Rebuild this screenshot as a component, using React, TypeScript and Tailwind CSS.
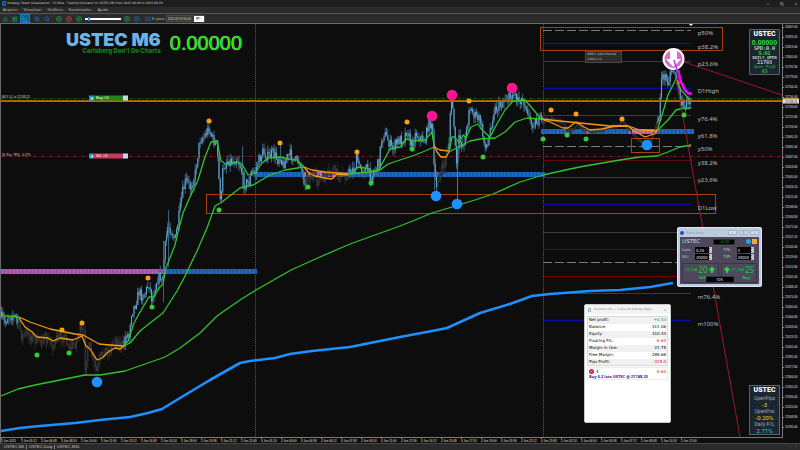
import React, { useState } from "react";
import {
  ArrowBigUp,
  ChartCandlestick,
  ChartLine,
  ChartNoAxesColumn,
  CirclePlay,
  CircleStop,
  Copy,
  Minus,
  SkipForward,
  X,
  ZoomIn,
  ZoomOut,
} from "lucide-react";

type Point = [number, number];

const ORIGIN_X = 1;
const ORIGIN_Y = 24;
const CHART_W = 781;
const CHART_H = 413;
const BAR_STEP = 1.25;

// middle of the traded range
const pricePath: Point[] = [
  [1, 317], [5, 323], [8, 316], [12, 315], [16, 318], [19, 325], [22, 337], [25, 334], [30, 336],
  [35, 338], [37, 349], [38, 338], [50, 342], [53, 345], [60, 336], [66, 338], [70, 349], [76, 342],
  [80, 329], [84, 336], [85, 368], [88, 345], [92, 356], [97, 374], [100, 358], [105, 350],
  [110, 350], [115, 338], [120, 345], [124, 345], [126, 333], [129, 336], [131, 313], [135, 305],
  [139, 292], [142, 296], [146, 291], [149, 283], [152, 301], [156, 282], [160, 275], [162, 285],
  [165, 248], [168, 225], [171, 230], [175, 240], [179, 216], [182, 195], [186, 180], [190, 188],
  [195, 175], [197, 160], [200, 139], [204, 137], [209, 128], [213, 140], [217, 145], [219, 180],
  [221, 205], [223, 167], [228, 160], [232, 162], [237, 158], [241, 168], [244, 184], [249, 182],
  [252, 172], [255, 173], [258, 162], [263, 152], [268, 157], [273, 153], [278, 160], [280, 153],
  [282, 166], [287, 158], [291, 154], [295, 161], [300, 161], [304, 180], [310, 176], [318, 181],
  [325, 178], [333, 170], [340, 177], [346, 175], [352, 170], [355, 168], [357, 156], [359, 168],
  [367, 169], [371, 178], [375, 170], [379, 162], [381, 142], [384, 133], [388, 140], [392, 149],
  [398, 141], [404, 138], [407, 129], [411, 146], [416, 133], [420, 138], [425, 141], [428, 125],
  [432, 122], [434, 165], [436, 192], [438, 178], [444, 165], [449, 141], [450, 115], [452, 98],
  [454, 125], [456, 165], [457, 160], [459, 140], [463, 145], [467, 130], [469, 107], [475, 116],
  [480, 120], [484, 142], [488, 146], [490, 130], [494, 110], [500, 106], [505, 98], [510, 98],
  [513, 93], [517, 97], [522, 100], [527, 106], [530, 123], [536, 122], [541, 120], [550, 119],
  [560, 121], [570, 133], [576, 124], [585, 130], [595, 132], [605, 129], [615, 126], [622, 122],
  [632, 133], [638, 139], [645, 143], [652, 139], [656, 125], [659, 116], [661, 80], [664, 76],
  [668, 80], [672, 68], [676, 74], [678, 90], [681, 100], [684, 108], [688, 102], [691, 98],
];

// stretches with no trend, drawn in dark grey
const flatRanges: Point[] = [[18, 124], [306, 349], [437, 449], [544, 657]];

const greenLines: Point[][] = [
  [[1, 312], [5, 316], [19, 317]],
  [[124, 346], [128, 341], [134, 323], [140, 312], [149, 297], [154, 297], [159, 288], [163, 284],
    [166, 268], [175, 245], [178, 232], [183, 213], [190, 197], [198, 180], [205, 157], [211, 142],
    [217, 141], [221, 161], [226, 164], [237, 162], [242, 164], [248, 175], [255, 173], [262, 163],
    [268, 158], [280, 157], [288, 159], [297, 160], [304, 167]],
  [[124, 346], [130, 343], [140, 331], [150, 323], [163, 313], [177, 291], [184, 278], [197, 251],
    [207, 228], [215, 206], [222, 202], [240, 188], [253, 185], [270, 175], [285, 170], [304, 167]],
  [[348, 174], [353, 173], [358, 167], [365, 168], [371, 171], [378, 171], [384, 160], [390, 149],
    [400, 147], [406, 139], [415, 141], [425, 140], [432, 132], [434, 145]],
  [[348, 174], [370, 172], [380, 170], [388, 164], [400, 160], [415, 155], [425, 151], [434, 147]],
  [[449, 152], [452, 137], [455, 137], [459, 143], [463, 135], [466, 138], [471, 127], [478, 124],
    [482, 130], [490, 137], [498, 122], [505, 110], [513, 101], [525, 100], [532, 108], [541, 119]],
  [[449, 152], [460, 146], [470, 141], [480, 139], [495, 138], [505, 132], [515, 122], [527, 118], [541, 119]],
  [[657, 131], [662, 115], [668, 95], [676, 79], [681, 90], [689, 99]],
  [[657, 131], [668, 120], [676, 110], [684, 108], [691, 108]],
  [[1, 396], [18, 389], [35, 385], [60, 380], [85, 375], [100, 375], [125, 371], [145, 364],
    [165, 357], [180, 348], [200, 333], [217, 316], [240, 300], [256, 290], [270, 282], [291, 270],
    [320, 257], [350, 244], [375, 235], [400, 226], [415, 220], [432, 213], [452, 207], [475, 200],
    [493, 194], [520, 182], [543, 175], [570, 169], [585, 166], [620, 160], [640, 157], [657, 156],
    [668, 152], [680, 147], [691, 145]],
];

const orangeLines: Point[][] = [
  [[19, 318], [25, 327], [32, 332], [37, 337], [48, 338], [53, 341], [60, 338], [73, 340], [82, 336],
    [86, 346], [90, 349], [97, 360], [102, 358], [108, 352], [115, 348], [120, 349], [124, 346]],
  [[19, 317], [30, 322], [50, 329], [75, 334], [83, 335], [92, 340], [99, 344], [110, 345], [124, 346]],
  [[304, 167], [309, 173], [315, 176], [325, 178], [332, 179], [337, 174], [348, 175]],
  [[304, 167], [312, 170], [325, 172], [348, 174]],
  [[434, 145], [437, 152], [441, 157], [446, 157], [449, 152]],
  [[434, 147], [440, 150], [449, 151]],
  [[541, 119], [550, 122], [563, 128], [568, 128], [576, 122], [584, 127], [590, 130], [602, 129],
    [615, 126], [628, 126], [636, 132], [645, 137], [654, 134], [657, 131]],
  [[541, 119], [560, 121], [590, 124], [610, 126], [628, 126], [640, 130], [657, 131]],
];

const slowLine: Point[] = [
  [1, 431], [20, 428], [40, 426], [75, 423], [100, 420], [130, 417], [148, 413], [162, 409],
  [180, 398], [210, 380], [240, 363], [250, 361], [275, 358], [290, 354], [312, 351], [350, 347],
  [375, 342], [400, 337], [432, 331], [447, 328], [480, 313], [510, 304], [532, 296], [550, 294],
  [590, 291], [620, 290], [650, 287], [673, 283],
];

const dots: { color: string; r: number; at: Point[] }[] = [
  {
    color: "#ffa011",
    r: 2.5,
    at: [[209, 121], [280, 143], [357, 152], [148, 278], [62, 330], [82, 323], [407, 122], [469, 101],
      [551, 110], [576, 114], [622, 119]],
  },
  {
    color: "#32cd32",
    r: 2.5,
    at: [[37, 355], [69, 353], [152, 307], [219, 210], [308, 187], [371, 183], [412, 149], [483, 157],
      [543, 139], [567, 135], [586, 139], [684, 115]],
  },
  { color: "#ff1493", r: 5.3, at: [[432, 116], [452, 95], [512, 88]] },
  { color: "#1e90ff", r: 5.3, at: [[97, 382], [436, 196], [457, 204], [647, 145]] },
];

const bands = [
  { x: 1, w: 165, y: 269, color: "#b455ae" },
  { x: 166, w: 91, y: 269, color: "#1763bd" },
  { x: 254, w: 50, y: 172, color: "#1763bd" },
  { x: 304, w: 45, y: 172, color: "#c45fc0" },
  { x: 349, w: 196, y: 172, color: "#1763bd" },
  { x: 541, w: 88, y: 129, color: "#1763bd" },
  { x: 584, w: 6, y: 129, color: "#7a5cb0" },
  { x: 629, w: 28, y: 129, color: "#c45fc0" },
  { x: 657, w: 37, y: 129, color: "#1763bd" },
];

const levels = [
  { y: 30, color: "#7c7c7c", dash: "9 3" },
  { y: 43, color: "#6b0a0a" },
  { y: 61, color: "#3c3c3c" },
  { y: 88, color: "#0a0aa8", w: 1.4 },
  { y: 115, color: "#3c3c3c" },
  { y: 146, color: "#7c7c7c", dash: "9 3" },
  { y: 160, color: "#5c0808" },
  { y: 177, color: "#3c3c3c" },
  { y: 204, color: "#0a0aa8", w: 1.4 },
  { y: 232, color: "#3c3c3c" },
  { y: 249, color: "#6b0a0a" },
  { y: 262, color: "#7c7c7c", dash: "9 3" },
  { y: 276, color: "#6b0a0a" },
  { y: 293, color: "#3c3c3c" },
  { y: 320, color: "#0a0aa8", w: 1.4 },
];

const levelLabels: [string, number][] = [
  ["p50%", 33],
  ["p38.2%", 47],
  ["p23.6%", 64],
  ["D1High", 91],
  ["y76.4%", 119],
  ["y61.8%", 136],
  ["y50%", 149],
  ["y38.2%", 163],
  ["y23.6%", 180],
  ["D1Low", 208],
  ["m76.4%", 297],
  ["m100%", 324],
];

const prices = Array.from({ length: 41 }, (_, i) => (21847 - i * 13.8).toFixed(2));

const times = [
  "3 Jun 2025", "3 Jun 05:12", "3 Jun 06:48", "3 Jun 08:24", "3 Jun 10:00", "3 Jun 11:36",
  "3 Jun 13:12", "3 Jun 14:48", "3 Jun 16:24", "3 Jun 18:00", "3 Jun 19:36", "3 Jun 21:12",
  "3 Jun 22:48", "4 Jun 01:24", "4 Jun 03:00", "4 Jun 04:36", "4 Jun 06:12", "4 Jun 07:48",
  "4 Jun 09:24", "4 Jun 11:00", "4 Jun 12:36", "4 Jun 14:12", "4 Jun 15:48", "4 Jun 17:24",
  "4 Jun 19:00", "4 Jun 20:36", "4 Jun 22:12", "4 Jun 23:48", "5 Jun 02:24", "5 Jun 04:00",
  "5 Jun 05:36", "5 Jun 07:12", "5 Jun 08:48", "5 Jun 10:24", "5 Jun 12:00",
];

const account: [string, string, string][] = [
  ["Net profit:", "+0.43", "text-green-600"],
  ["Balance:", "311.06", "text-black"],
  ["Equity:", "310.43", "text-black"],
  ["Floating P/L:", "-0.63", "text-red-600"],
  ["Margin In Use:", "21.75", "text-black"],
  ["Free Margin:", "288.68", "text-black"],
  ["Pips Profit:", "-315.0", "text-red-600"],
];

function priceAt(x: number) {
  for (let i = 1; i < pricePath.length; i++) {
    const [x0, y0] = pricePath[i - 1];
    const [x1, y1] = pricePath[i];
    if (x <= x1) return y0 + ((y1 - y0) * (x - x0)) / (x1 - x0);
  }
  return pricePath[pricePath.length - 1][1];
}

function buildCandles() {
  let seed = 7;
  const rand = () => {
    seed = (seed * 16807) % 2147483647;
    return seed / 2147483647;
  };
  const out = [];
  let prev = priceAt(1);
  for (let x = 1.5; x < 691; x += BAR_STEP) {
    const flat = flatRanges.some(([a, b]) => x >= a && x < b);
    const amp = x > 545 && x < 657 ? 4 : 11;
    const close = priceAt(x) + (rand() - 0.5) * amp;
    const top = Math.min(prev, close);
    const bottom = Math.max(prev, close);
    out.push({
      x,
      flat,
      top,
      bottom: Math.max(bottom, top + 1),
      high: top - rand() * amp * 0.6,
      low: bottom + rand() * amp * 0.6,
    });
    prev = close;
  }
  return out;
}

const candles = buildCandles();

const toPoints = (line: Point[]) => line.map((p) => p.join(",")).join(" ");
const topOf = (y: number) => `${((y - ORIGIN_Y) / CHART_H) * 100}%`;

function TitleBar() {
  return (
    <header className="flex h-[7px] shrink-0 items-center gap-px bg-[#1e1e1e] pl-[2px] pr-[2px] text-[#d0d0d0]">
      <svg viewBox="0 0 10 12" className="h-[5px] w-[4px]">
        <rect x="0" y="0" width="10" height="12" rx="3" fill="#1273c9" />
        <circle cx="5" cy="6" r="2.5" fill="#0b1d33" />
      </svg>
      <h1 className="grow font-['DejaVu_Sans',sans-serif] text-[3px] leading-none whitespace-nowrap">
        Strategy Tester Visualization - FX Blue - Trading Simulator on USTEC,M6 from 2025.06.06 to 2025.09.20
      </h1>
      <div className="flex gap-[10px]">
        <button type="button" aria-label="Minimizar"><Minus size={4} /></button>
        <button type="button" aria-label="Restaurar"><Copy size={4} /></button>
        <button type="button" aria-label="Fechar"><X size={4} /></button>
      </div>
    </header>
  );
}

function MenuBar() {
  return (
    <nav className="flex h-[6px] shrink-0 items-center gap-[6px] bg-[#2b2b2b] pl-[3px] text-[4px] leading-none text-[#b8b8b8]">
      {["Arquivo", "Visualizar", "Gráficos", "Examinador", "Ajuda"].map((item) => (
        <button key={item} type="button">{item}</button>
      ))}
    </nav>
  );
}

function Toolbar() {
  const [speed, setSpeed] = useState(8);
  return (
    <div className="flex h-[10px] shrink-0 items-center border-t border-[#575757] bg-[#2b2b2b] text-[4px] leading-none">
      <div className="flex items-center">
        <button type="button" aria-label="Barras" className="flex h-[9px] w-[10px] items-center justify-center text-[#1c8f55]">
          <ChartNoAxesColumn size={6} strokeWidth={3} />
        </button>
        <button type="button" aria-label="Velas" className="flex h-[9px] w-[10px] items-center justify-center text-[#1c8f55]">
          <ChartCandlestick size={6} strokeWidth={3} />
        </button>
        <button type="button" aria-label="Linha" className="flex h-[9px] w-[10px] items-center justify-center border border-[#1b78c8] bg-[#0c5a9c] text-[#27b0a0]">
          <ChartLine size={6} strokeWidth={3} />
        </button>
      </div>
      <div className="ml-[2px] flex items-center">
        <button type="button" aria-label="Ampliar" className="flex w-[10px] justify-center text-[#1a62b5]"><ZoomIn size={6} strokeWidth={3} /></button>
        <button type="button" aria-label="Reduzir" className="flex w-[10px] justify-center text-[#1a62b5]"><ZoomOut size={6} strokeWidth={3} /></button>
      </div>
      <div className="ml-[2px] flex items-center">
        <button type="button" aria-label="Iniciar" className="flex w-[10px] justify-center text-[#1c9b5a]"><CirclePlay size={6} strokeWidth={3} /></button>
        <button type="button" aria-label="Parar" className="flex w-[10px] justify-center text-[#c8402c]"><CircleStop size={6} strokeWidth={3} /></button>
        <button type="button" aria-label="Mais lento" className="flex w-[10px] justify-center text-[#1c9b5a]"><CirclePlay size={6} strokeWidth={3} /></button>
      </div>
      <input
        type="range"
        aria-label="Velocidade"
        value={speed}
        onChange={(e) => setSpeed(Number(e.target.value))}
        className="ml-[1px] h-[2px] w-[36px] appearance-none bg-white [&::-webkit-slider-thumb]:h-[4px] [&::-webkit-slider-thumb]:w-[2px] [&::-webkit-slider-thumb]:appearance-none [&::-webkit-slider-thumb]:bg-[#1a86e0]"
      />
      <div className="ml-[1px] flex items-center">
        <button type="button" aria-label="Mais rápido" className="flex w-[10px] justify-center text-[#1c9b5a]"><CirclePlay size={6} strokeWidth={3} /></button>
        <button type="button" aria-label="Máximo" className="flex w-[10px] justify-center text-[#1a62b5]"><CirclePlay size={6} strokeWidth={3} /></button>
      </div>
      <button type="button" className="ml-[3px] flex items-center gap-px text-[#c0c0c0]">
        <SkipForward size={6} strokeWidth={3} className="text-[#1a62b5]" />
        <span className="whitespace-nowrap">Ir para</span>
      </button>
      <div className="ml-px flex h-[7px] items-center border border-[#4a4a4a] bg-[#383838]">
        <input
          aria-label="Data"
          defaultValue="2025.09.19 00:00"
          className="w-[27px] pl-px font-['Liberation_Sans',sans-serif] text-[3px] leading-none text-[#d8d8d8]"
        />
        <button type="button" aria-label="Calendário" className="flex h-[6px] w-[10px] items-center justify-center bg-white text-[3px] text-gray-600">
          ▦▾
        </button>
      </div>
    </div>
  );
}

function Plot() {
  return (
    <svg
      viewBox={`${ORIGIN_X} ${ORIGIN_Y} ${CHART_W} ${CHART_H}`}
      preserveAspectRatio="none"
      className="block h-full w-full"
    >
      <defs>
        <pattern id="bars" width="3.75" height="5" patternUnits="userSpaceOnUse">
          <rect width="1" height="5" fill="#000" opacity="0.16" />
          <rect x="2.5" width="0.6" height="5" fill="#fff" opacity="0.12" />
        </pattern>
      </defs>

      {[255.5, 543.5].map((x) => (
        <line key={x} x1={x} x2={x} y1="24" y2="437" stroke="#777" strokeWidth="0.7" strokeDasharray="1.2 1" />
      ))}
      {levels.map((l) => (
        <line key={l.y} x1="543" x2="691" y1={l.y + 0.5} y2={l.y + 0.5} stroke={l.color} strokeWidth={l.w ?? 1} strokeDasharray={l.dash} />
      ))}

      <line x1="1" x2="782" y1="98.5" y2="98.5" stroke="#17601a" strokeWidth="0.9" strokeDasharray="4 1.5 1 1.5" />
      <line x1="1" x2="782" y1="156.5" y2="156.5" stroke="#7a2412" strokeWidth="0.9" strokeDasharray="4 1.5 1 1.5" />

      {bands.map((b) => (
        <g key={`${b.x}-${b.y}`}>
          <rect x={b.x} y={b.y} width={b.w} height="5" fill={b.color} />
          <rect x={b.x} y={b.y} width={b.w} height="5" fill="url(#bars)" />
        </g>
      ))}

      {candles.map((c) => (
        <g key={c.x}>
          <line x1={c.x} x2={c.x} y1={c.high} y2={c.low} stroke={c.flat ? "#2b2b2b" : "#3c6482"} strokeWidth="1" />
          <line x1={c.x} x2={c.x} y1={c.top} y2={c.bottom} stroke={c.flat ? "#3a3a3a" : "#62a4d0"} strokeWidth="1.1" />
        </g>
      ))}
      {/* long wicks */}
      <g stroke="#3f6a88" strokeWidth="0.9">
        <line x1="163.5" x2="163.5" y1="241" y2="302" />
        <line x1="168.5" x2="168.5" y1="210" y2="267" />
        <line x1="242.5" x2="242.5" y1="146" y2="188" />
        <line x1="457.5" x2="457.5" y1="150" y2="203" stroke="#4f83a8" />
        <line x1="434.5" x2="434.5" y1="130" y2="190" />
        <line x1="280.5" x2="280.5" y1="145" y2="162" />
      </g>

      <line x1="1" x2="782" y1="100.5" y2="100.5" stroke="#a8640c" />
      <line x1="1" x2="782" y1="101.5" y2="101.5" stroke="#7c7468" />

      <g fill="none" stroke="#a8410c">
        <rect x="540.5" y="27.5" width="182" height="23" />
        <rect x="206.5" y="194.5" width="509" height="19" />
        <rect x="631.5" y="138.5" width="28" height="14" />
      </g>

      <g fill="none" strokeLinejoin="round">
        {greenLines.map((l, i) => (
          <polyline key={i} points={toPoints(l)} stroke="#2fc42f" strokeWidth="1.3" />
        ))}
        {orangeLines.map((l, i) => (
          <polyline key={i} points={toPoints(l)} stroke="#f59a12" strokeWidth="1.3" />
        ))}
        <polyline points={toPoints(slowLine)} stroke="#1e90ff" strokeWidth="2.6" />
        <line x1="676" y1="78" x2="740" y2="437" stroke="#a01530" />
        <line x1="684" y1="62" x2="782" y2="95" stroke="#a01530" />
      </g>

      {dots.map((d) =>
        d.at.map(([x, y]) => <circle key={`${x}-${y}`} cx={x} cy={y} r={d.r} fill={d.color} />)
      )}

      {/* sell signal at the top */}
      <circle cx="673.5" cy="59" r="10" fill="#d46ed0" stroke="#fff" strokeWidth="2" />
      <path d="M670 50h7v9h4l-7.500 8-7.500-8h4z" fill="#fff" />
      <polyline points="674,60 676,67 678,72" fill="none" stroke="#b040e0" strokeWidth="1.6" />
      <polyline points="678,70 681,82 685,90 688,93 692,94" fill="none" stroke="#ff00ff" strokeWidth="2.6" />
      <circle cx="678.5" cy="83" r="1.2" fill="#ff6a2a" />
      <g fill="none" stroke="#8c8c8c" strokeWidth="0.7">
        <circle cx="659.5" cy="119.5" r="1.6" />
        <circle cx="690" cy="100" r="1.6" />
      </g>
      <path d="M689 24h4l-2 2z" fill="#fff" />
    </svg>
  );
}

function TradeTag({ y, note, label, color }: { y: number; note: string; label: string; color: string }) {
  return (
    <div
      className="absolute left-px flex -translate-y-1/2 items-center font-['Liberation_Sans',sans-serif] text-[4px] leading-none"
      style={{ top: topOf(y) }}
    >
      <span className="w-[87px] pb-[2px] text-[3px] whitespace-nowrap text-[#d8d8d8]">{note}</span>
      <span className="flex h-[5px] w-[5px] items-center justify-center bg-[#0fa3d8]">
        <span className="h-[2px] w-[2px] rounded-full bg-white" />
      </span>
      <span className={`h-[5px] w-[29px] pl-[2px] text-white ${color}`}>{label}</span>
      <button type="button" aria-label={`Fechar ${label}`} className="h-[5px] w-[5px] bg-[#c4d8f4]" />
    </div>
  );
}

function Quote() {
  return (
    <section className="absolute top-[5px] right-[2px] flex w-[31px] flex-col items-center rounded-[1px] border border-[#5a6570] bg-[#1b2632] font-['DejaVu_Sans_Mono',monospace] text-[5px] leading-[5px] text-white">
      <h2 className="font-['Roboto','Liberation_Sans',sans-serif] text-[7px] leading-[9px] font-black">USTEC</h2>
      <p className="font-['Liberation_Sans',sans-serif] text-[7px] leading-[7px] font-bold text-[#22e022]">0.00000</p>
      <p>SPD:0.0</p>
      <p className="font-bold text-[#22e022]">5:01</p>
      <p className="text-[4px] leading-[4px]">DAILY_OPEN</p>
      <p>21703</p>
      <p className="text-[4px] leading-[4px] text-[#22c022]">Open PipD</p>
      <p className="text-[#22e022]">43</p>
    </section>
  );
}

function Stats() {
  return (
    <section className="absolute right-[2px] bottom-[2px] flex w-[31px] flex-col items-center border border-[#5a6570] bg-[#1b2632] font-['Roboto','Liberation_Sans',sans-serif] text-[5px] leading-[6px] text-[#a0a4a8]">
      <h2 className="text-[7px] leading-[9px] font-black text-white">USTEC</h2>
      <p>OpenPips</p>
      <p className="text-[6px] leading-[7px] text-[#e0d81c]">-3</p>
      <p>OpenPos</p>
      <p className="text-[6px] leading-[7px] text-[#e0d81c]">-0.20%</p>
      <p>Daily P/L</p>
      <p className="text-[6px] leading-[7px] text-[#18d8d8]">2.71%</p>
    </section>
  );
}

function Field({ id, label, value }: { id: string; label: string; value: string }) {
  return (
    <div className="flex items-center">
      <label htmlFor={id} className="w-[13px]">{label}</label>
      <input id={id} defaultValue={value} className="h-[6px] w-[14px] bg-black pl-px text-[4px] leading-none text-white" />
      <span className="flex h-[6px] w-[3px] flex-col justify-between bg-[#c8c8cc] text-[2px] leading-[3px] text-black">
        <span>▴</span>
        <span>▾</span>
      </span>
    </div>
  );
}

function Simulator() {
  return (
    <section className="absolute top-[203px] left-[676px] w-[85px] rounded-[2px] border border-[#dfe9f4] bg-[#bccbdd] px-[2px] pb-[2px] font-['Noto_Sans',sans-serif] text-[4px] leading-none text-[#d8d8e0]">
      <header className="flex h-[9px] items-center gap-[2px] text-[#8a96a8]">
        <span className="h-[4px] w-[4px] rounded-full bg-[#1255b8]" />
        <h2 className="grow">Simulator</h2>
        {[Minus, Copy, X].map((Icon, i) => (
          <button key={i} type="button" aria-label={["Minimizar", "Restaurar", "Fechar"][i]} className="flex h-[5px] w-[9px] items-center justify-center rounded-[1px] border border-[#a4b2c4] bg-[#d5dfea] text-[#5a6678]">
            <Icon size={3} />
          </button>
        ))}
      </header>
      <div className="flex flex-col gap-px bg-[#4d485c] px-[2px] pt-px pb-px">
        <div className="flex items-center">
          <strong className="w-[31px] text-[6px] leading-[7px] font-normal">USTEC</strong>
          <span className="flex h-[6px] w-[22px] items-center justify-center rounded-[1px] border border-[#2c2838] bg-black text-[#18b818]">+0.20</span>
          <span className="ml-auto h-[5px] w-[5px] rounded-full bg-[#2ea2e0]" />
          <span className="ml-px h-[5px] w-[5px] bg-[#f0aa30]" />
        </div>
        <div className="mt-px grid grid-cols-2 gap-x-[8px] gap-y-px">
          <Field id="lots" label="Lots:" value="0.20" />
          <Field id="ts" label="T/S:" value="0" />
          <Field id="sl" label="S/L:" value="20000" />
          <Field id="tp" label="T/P:" value="20000" />
        </div>
        <div className="relative mt-[2px] grid grid-cols-2 gap-[2px] text-[#26c63e]">
          <button type="button" className="flex flex-col rounded-[1px] border border-[#38334a]">
            <span className="flex h-[12px] w-full items-center justify-center">
              21,748.<span className="text-[8px]">20</span>
              <ArrowBigUp size={8} fill="#28e050" />
            </span>
            <span className="h-[6px] pl-[5px] font-bold">Sell</span>
          </button>
          <button type="button" className="flex flex-col items-end rounded-[1px] border border-[#38334a]">
            <span className="flex h-[12px] w-full items-center justify-center">
              <ArrowBigUp size={8} fill="#28e050" />
              21,748.<span className="text-[8px]">25</span>
            </span>
            <span className="h-[6px] pr-[6px] font-bold">Buy</span>
          </button>
          <span className="absolute bottom-0 left-1/2 flex h-[7px] w-[29px] -translate-x-1/2 items-center justify-center rounded-[1px] border border-[#38334a] bg-black text-white">
            105
          </span>
        </div>
      </div>
    </section>
  );
}

function AccountInfo() {
  return (
    <section className="absolute top-[280px] left-[583px] flex h-[119px] w-[87px] flex-col rounded-[2px] border border-[#c8c8c8] bg-white font-['DejaVu_Sans',sans-serif] text-[4px] leading-none">
      <header className="flex h-[9px] shrink-0 items-center gap-[3px] bg-[#f3f3f3] px-[3px] text-[#8a8a8a]">
        <span className="h-[4px] w-[3px] border border-[#9ab8d8] bg-white" />
        <h2 className="grow text-[3px] whitespace-nowrap">Account info — Caixa de diálogo Págin...</h2>
        <button type="button" aria-label="Fechar"><X size={4} /></button>
      </header>
      <div className="flex flex-col gap-px px-[2px] pt-[2px]">
        <table className="w-full border border-[#d8d8d8]">
          <tbody>
            {account.map(([name, value, color]) => (
              <tr key={name} className="h-[7px] odd:bg-[#f1f1f1]">
                <th scope="row" className="pl-px text-left font-normal text-black">{name}</th>
                <td className={`pr-px text-right ${color}`}>{value}</td>
              </tr>
            ))}
          </tbody>
        </table>
        <div className="border border-[#ececec] px-px">
          <div className="flex h-[7px] items-center gap-[2px]">
            <button type="button" aria-label="Fechar ordem" className="flex h-[5px] w-[5px] items-center justify-center rounded-full bg-[#e01030] text-white">
              <X size={3} strokeWidth={4} />
            </button>
            <span className="grow">4</span>
            <span className="text-red-600">-0.63</span>
          </div>
          <p className="font-['Noto_Sans',sans-serif] font-bold whitespace-nowrap text-[#1c1c90]">Buy 0.2 lots USTEC @ 21748.25</p>
        </div>
      </div>
    </section>
  );
}

function PriceAxis() {
  return (
    <div className="relative flex w-[18px] shrink-0 flex-col justify-between border-l border-[#7a7a7a] pb-[7px] font-['Liberation_Sans',sans-serif] text-[3px] leading-[6px] text-[#e0e0e0]">
      {prices.map((p) => (
        <div key={p} className="flex items-center gap-px">
          <span className="h-px w-px bg-[#8a8a8a]" />
          <span>{p}</span>
        </div>
      ))}
      <span className="absolute left-0 w-[16px] -translate-y-1/2 border-t border-[#f09a20] bg-[#e8e8e8] pl-[2px] leading-[4px] text-black" style={{ top: topOf(101) }}>
        21748.25
      </span>
    </div>
  );
}

export default function App() {
  return (
    <div className="flex h-screen flex-col overflow-hidden bg-[#0d0d0d] font-['Noto_Sans',sans-serif]">
      <TitleBar />
      <MenuBar />
      <Toolbar />
      <main className="flex min-h-0 grow border-t border-l border-[#6a6a6a]">
        <div className="relative min-w-0 grow">
          <Plot />
          <div className="absolute top-[8px] left-[65px] flex items-start gap-[9px] leading-none">
            <div className="text-right font-['Inter','Liberation_Sans',sans-serif] font-black whitespace-nowrap">
              <h2 className="text-[18px] leading-[16px] text-[#6cb4e8]">USTEC M6</h2>
              <p className="text-[6px] leading-[6px] text-[#0c7c10]">Carlsberg Don't Do Charts</p>
            </div>
            <p className="font-['Liberation_Sans',sans-serif] text-[20px] leading-[22px] text-[#00f000] [text-shadow:0_0_1px_#fff]">0.00000</p>
          </div>
          <TradeTag y={98} note="BUY 0.2 at 21748.25" label="Buy #4" color="bg-[#1f8420]" />
          <TradeTag y={156} note="SL Pos: TP/4, -0.27%" label="S/L #4" color="bg-[#cc3560]" />
          <p className="absolute top-[27px] left-[584px] w-[37px] border border-[#484848] bg-[#2c2c2c] pl-px font-['DejaVu_Sans',sans-serif] text-[3px] leading-[5px] whitespace-nowrap text-[#c8c8c8]">
            ADR2- p38.2%/Line
            <br />
            21821.12
          </p>
          {levelLabels.map(([text, y]) => (
            <span key={text} className="absolute left-[89.2%] -translate-y-1/2 text-[6px] leading-none text-[#bcbcbc]" style={{ top: topOf(y) }}>
              {text}
            </span>
          ))}
          <Quote />
          <Stats />
          <AccountInfo />
          <Simulator />
        </div>
        <PriceAxis />
      </main>
      <div className="flex h-[6px] shrink-0 border-l border-[#6a6a6a] pr-[17px] font-['Liberation_Sans',sans-serif] text-[3px] leading-[5px] text-[#e0e0e0]">
        <div className="flex grow border-t border-[#7a7a7a]">
          {times.map((t) => (
            <span key={t} className="w-[20px]">
              <span className="block h-px w-px bg-[#8a8a8a]" />
              <span className="block leading-[4px] whitespace-nowrap">{t}</span>
            </span>
          ))}
        </div>
      </div>
      <footer className="flex h-[7px] shrink-0 items-center border-t border-[#484848] bg-[#2a2a2a] pl-[4px] font-['Liberation_Sans',sans-serif] text-[4px] leading-none text-[#c4c4c4]">
        <button type="button" className="w-[23px] border-r border-[#888] text-left">USTEC,M6</button>
        <button type="button" className="ml-[2px] w-[26px] border-r border-[#888] text-left">USTEC,Daily</button>
        <button type="button" className="ml-[2px]">USTEC,M30</button>
        <span className="ml-auto flex gap-[4px] pr-[4px] text-[#888]">
          <button type="button" aria-label="Anterior">‹</button>
          <button type="button" aria-label="Seguinte">›</button>
        </span>
      </footer>
    </div>
  );
}
